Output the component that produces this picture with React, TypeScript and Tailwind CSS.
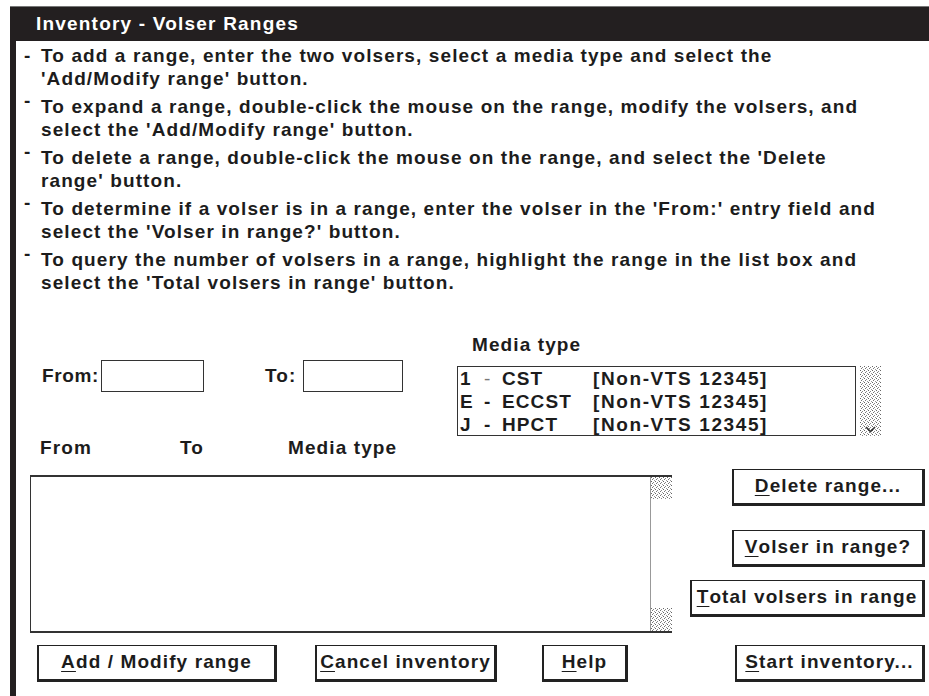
import React from 'react';

const ITEMS: { high: boolean; lines: [string, string] }[] = [
  {
    high: false,
    lines: ['To add a range, enter the two volsers, select a media type and select the', "'Add/Modify range' button."],
  },
  {
    high: true,
    lines: ['To expand a range, double-click the mouse on the range, modify the volsers, and', "select the 'Add/Modify range' button."],
  },
  {
    high: true,
    lines: ["To delete a range, double-click the mouse on the range, and select the 'Delete", "range' button."],
  },
  {
    high: true,
    lines: ["To determine if a volser is in a range, enter the volser in the 'From:' entry field and", "select the 'Volser in range?' button."],
  },
  {
    high: true,
    lines: ['To query the number of volsers in a range, highlight the range in the list box and', "select the 'Total volsers in range' button."],
  },
];

const MEDIA = [
  { code: '1', name: 'CST', light: true },
  { code: 'E', name: 'ECCST', light: false },
  { code: 'J', name: 'HPCT', light: false },
];

function Stipple({ id, className }: { id: string; className?: string }) {
  return (
    <svg className={className} width="100%" height="100%">
      <defs>
        <pattern id={id} width="4" height="4" patternUnits="userSpaceOnUse">
          <rect x="0" y="0" width="1" height="1" fill="#666" />
          <rect x="2" y="1" width="1" height="1" fill="#888" />
          <rect x="1" y="2" width="1" height="1" fill="#777" />
          <rect x="3" y="3" width="1" height="1" fill="#999" />
        </pattern>
      </defs>
      <rect width="100%" height="100%" fill={`url(#${id})`} />
    </svg>
  );
}

function Btn({ label, mn, className }: { label: string; mn: number; className: string }) {
  return (
    <button
      className={`h-[37px] bg-white border-t border-l-2 border-r-[3px] border-b-[3px] border-[#222] flex items-center justify-center whitespace-nowrap ${className}`}
    >
      {label.slice(0, mn)}
      <span className="underline underline-offset-[3px]">{label[mn]}</span>
      {label.slice(mn + 1)}
    </button>
  );
}

export default function App() {
  return (
    <div className="w-[929px] h-[696px] bg-white pt-[6px] pl-[10px] text-[#1c1c1c] text-[19px] tracking-[1.1px] font-bold [font-family:'Liberation_Sans',Arial,sans-serif] overflow-hidden">
      {/* title bar */}
      <div className="h-[35px] bg-[#231f20] border-t border-[#777] text-white text-[19px] leading-[33px] pl-[26px] tracking-[1.2px]">
        Inventory - Volser Ranges
      </div>

      <div className="h-[655px] border-l-[6px] border-[#231f20] flex flex-col">
        {/* instructions */}
        <div className="pt-[3px] flex flex-col gap-[5px]">
          {ITEMS.map((it) => (
            <div key={it.lines[0]} className="flex leading-[23px] whitespace-nowrap">
              <span className={`w-[25px] pl-[8px] ${it.high ? 'leading-[12px]' : ''}`}>-</span>
              <div>
                <div>{it.lines[0]}</div>
                <div>{it.lines[1]}</div>
              </div>
            </div>
          ))}
        </div>

        {/* entry fields + media type */}
        <div className="mt-[39px] flex">
          <div className="w-[441px] flex flex-col">
            <div className="mt-[27px] flex items-center h-[32px]">
              <span className="ml-[26px] w-[59px] tracking-[0.6px]">From:</span>
              <div className="w-[103px] h-[32px] border border-[#333]" />
              <span className="ml-[61px] w-[38px]">To:</span>
              <div className="w-[100px] h-[32px] border border-[#333]" />
            </div>
            <div className="mt-[44px] flex leading-[23px]">
              <span className="ml-[24px] w-[140px]">From</span>
              <span className="w-[108px]">To</span>
              <span>Media type</span>
            </div>
          </div>
          <div className="flex flex-col">
            <div className="ml-[15px] leading-[23px]">Media type</div>
            <div className="mt-[10px] flex">
              <div className="w-[399px] h-[70px] border border-[#333] pl-[2px] leading-[23px]">
                {MEDIA.map((m) => (
                  <div key={m.code} className="flex whitespace-nowrap">
                    <span className="w-[24px]">{m.code}</span>
                    <span className={`w-[18px] ${m.light ? 'font-normal text-[#777]' : ''}`}>-</span>
                    <span className="w-[91px]">{m.name}</span>
                    <span className="tracking-[1.6px]">[Non-VTS 12345]</span>
                  </div>
                ))}
              </div>
              <div className="ml-[4px] w-[21px] h-[70px] relative">
                <Stipple id="mscroll" />
                <svg className="absolute left-[5px] bottom-[3px]" width="11" height="7" viewBox="0 0 11 7">
                  <path d="M1 1 L5.5 5.5 L10 1" stroke="#333" strokeWidth="1.6" fill="none" />
                </svg>
              </div>
            </div>
          </div>
        </div>

        {/* list box + side buttons */}
        <div className="mt-[10px] flex">
          <div className="ml-[14px] mt-[6px] w-[642px] h-[158px] border-t-2 border-b-2 border-l border-[#333] flex">
            <div className="flex-1 border-r border-[#999]" />
            <div className="w-[21px] flex flex-col justify-between">
              <Stipple id="lscroll1" className="h-[22px]" />
              <Stipple id="lscroll2" className="h-[23px]" />
            </div>
          </div>
          <div className="ml-[18px] w-[235px] flex flex-col items-end">
            <Btn label="Delete range..." mn={0} className="w-[193px]" />
            <Btn label="Volser in range?" mn={0} className="mt-[24px] w-[193px]" />
            <Btn label="Total volsers in range" mn={0} className="mt-[13px] w-[235px]" />
          </div>
        </div>

        {/* bottom buttons */}
        <div className="mt-[12px] flex">
          <Btn label="Add / Modify range" mn={0} className="ml-[21px] w-[240px]" />
          <Btn label="Cancel inventory" mn={0} className="ml-[38px] w-[182px]" />
          <Btn label="Help" mn={0} className="ml-[45px] w-[86px]" />
          <Btn label="Start inventory..." mn={0} className="ml-[107px] w-[190px]" />
        </div>
      </div>
    </div>
  );
}
